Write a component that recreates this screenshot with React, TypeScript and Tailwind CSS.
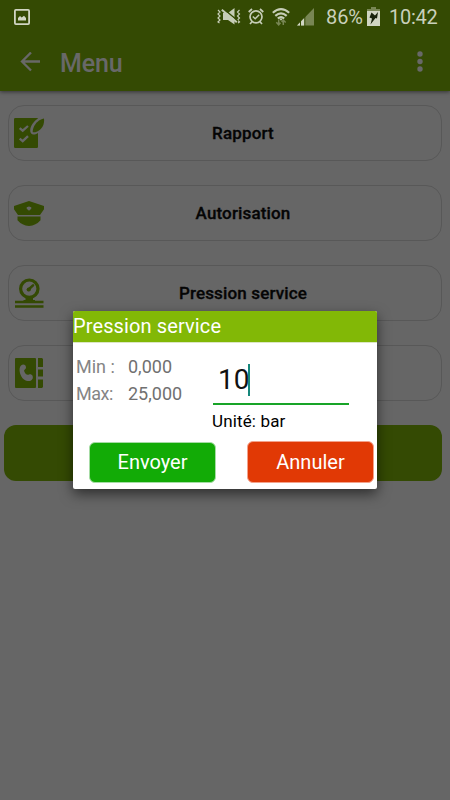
import type { ReactNode } from "react";

function PictureIcon() {
  return (
    <svg className="ml-[14px] h-4 w-4 shrink-0" viewBox="0 0 16 16" fill="none">
      <rect x="0.9" y="0.9" width="14.2" height="14.2" rx="1" stroke="#d0d5c3" strokeWidth="1.8" />
      <path d="M4 11.5V9l2-2 1.7 1.6L10 6.8l2 2.2v2.5z" fill="#d0d5c3" />
    </svg>
  );
}

function MutedIcon() {
  return (
    <svg className="ml-[187px] h-[17px] w-6 shrink-0" viewBox="0 0 24 17" fill="none" stroke="#c6cdb7">
      <path d="M1 2l2 2-2 2 2 2-2 2 2 2-2 2 1.500 1M22.500 2l-2 2 2 2-2 2 2 2-2 2 2 2-1.500 1" strokeWidth="1.200" />
      <path d="M6 5h5l6.500-5v16.500L11 12H6z" fill="#c6cdb7" stroke="none" />
      <path d="M6 0.500l15 12.500" stroke="#344a03" strokeWidth="1.600" />
      <path d="M4.800 1.800l15 12.500" strokeWidth="2" />
    </svg>
  );
}

function AlarmIcon() {
  return (
    <svg className="ml-[7px] h-[17px] w-4 shrink-0" viewBox="0 0 16 17" fill="none" stroke="#c6cdb7" strokeWidth="1.700">
      <circle cx="8" cy="8.800" r="6" />
      <path d="M.7 4L4 1M15.300 4L12 1M4 13.700L2 16M12 13.700l2 2.300" />
      <path d="M4.800 8.500l2.400 2.300 4-4" strokeWidth="1.500" />
    </svg>
  );
}

function WifiIcon() {
  return (
    <svg className="ml-2 h-[18px] w-[18px] shrink-0" viewBox="0 0 18 18" fill="none" stroke="#c6cdb7">
      <path d="M.8 4.800Q9-2.500 17.200 4.800M3.300 7.900Q9 2.800 14.700 7.900M5.800 10.500Q9 7.600 12.200 10.500" strokeWidth="2.100" />
      <path d="M7 10.500h4L9 12.800z" fill="#c6cdb7" stroke="none" />
      <path d="M6.700 11.500v5M4.300 14.300l2.400 2.500 1.800-2M11.300 17v-5M9.600 14l1.700-2 2.400 2.500" stroke="#788654" strokeWidth="1.500" />
    </svg>
  );
}

function SignalIcon() {
  return (
    <svg className="ml-[7px] h-[18px] w-[17px] shrink-0" viewBox="0 0 17 18">
      <path d="M0 17.500L17 0v17.500z" fill="#788654" />
      <path d="M0 17.500L7.500 9.800v7.700z" fill="#d0d5c3" />
      <path d="M3.500 12v6M7.800 7v11" stroke="#344a03" />
    </svg>
  );
}

function BatteryIcon() {
  return (
    <svg className="ml-[5px] h-[19px] w-[13px] shrink-0" viewBox="0 0 13 19">
      <path d="M4 0h5v2h4v3H0V2h4z" fill="#788654" />
      <path d="M0 4h13v15H0z" fill="#d0d5c3" />
      <path d="M4.500 5.500L8 8.500 11 5l-1 6.500L8.500 11l-5 6.500 1.500-6-2.500-1z" fill="#17210a" />
    </svg>
  );
}

function ReportIcon() {
  return (
    <svg viewBox="0 0 31 31" className="h-[31px] w-[31px] shrink-0" fill="none">
      <rect x="0" y="0" width="24" height="30" rx="1.300" fill="#344a03" />
      <path d="M5.700 10.200l3 2.500 5.300-4.700M5.700 20.700l3 2.500 5.300-5" stroke="#666" strokeWidth="2.300" />
      <path d="M24.500 0C20 3 16.500 7.500 16.200 12c-.2 4.500 3 6 7.800 3V0z" fill="#666" />
      <path d="M30 .5c-5 1-8.500 4.500-10.200 8.500-.8 2-1.300 4.300-1 5.200 3.800.8 7.700-2.200 9.700-5.400C30 6 30.300 3 30 .5z" fill="#344a03" />
    </svg>
  );
}

function CapIcon() {
  return (
    <svg viewBox="0 0 31 31" className="h-[31px] w-[31px] shrink-0" fill="#344a03">
      <path fillRule="evenodd" d="M0 8L15 3l15 5v3.200L26 17H4L0 11.200zM12.700 9.200v1.500L15 12.800l2.300-2.100V9.200L15 8.500z" />
      <path d="M3.500 18.500h23v3.800Q22 27.500 15 28 8 27.500 3.500 22.300z" />
    </svg>
  );
}

function GaugeIcon() {
  return (
    <svg viewBox="0 0 31 31" className="h-[31px] w-[31px] shrink-0" fill="none" stroke="#344a03">
      <circle cx="15.300" cy="10.700" r="8.700" strokeWidth="3.200" />
      <path d="M14 12l5-4.700" strokeWidth="2.500" strokeLinecap="round" />
      <circle cx="14.800" cy="11.500" r="2.100" fill="#344a03" stroke="none" />
      <path d="M11.500 19h7.500v3h2v2H9.500v-2h2z" fill="#344a03" stroke="none" />
      <path d="M1 24h28.500M1 28.500h28.500" strokeWidth="2.300" />
    </svg>
  );
}

function ContactsIcon() {
  return (
    <svg viewBox="0 0 31 31" className="h-[31px] w-[31px] shrink-0" fill="#344a03">
      <rect x="1" y="0" width="21" height="30" rx="1" />
      <path d="M24 0h4l1 1v8h-5zM24 11.500h5v7h-5zM24 21.500h5v7.500l-1 1h-4z" />
      <path d="M7 7.500c2.500-2 5-.5 5 2 0 2-2.500 2-1.700 4 1 2.500 2.700 4 4.700 3 2.500-1.200 4.500 1.500 3.700 4-1.200 3-5.200 3.500-8.700 1C6 18.500 4 10.500 7 7.500z" fill="#666" />
    </svg>
  );
}

function MenuRow({ icon, label }: { icon: ReactNode; label: string }) {
  return (
    <div className="flex h-14 items-center rounded-2xl border border-[#585858] pl-[5px]">
      {icon}
      <span className="flex-1 pt-px text-center text-[17px] font-medium tracking-[0.150px] text-[#050505] [-webkit-text-stroke:0.300px_#050505]">{label}</span>
    </div>
  );
}

function PressureDialog() {
  return (
    <div className="absolute top-[311px] left-[73px] flex h-[178px] w-[304px] flex-col overflow-hidden rounded-[2px] bg-white shadow-[0_5px_13px_rgba(0,0,0,0.55)]">
      <div className="flex h-[31px] shrink-0 items-center bg-[#82b806] text-[20px] tracking-[0.120px] text-white">
        <span className="-mt-0.5">Pression service</span>
      </div>
      <div className="flex h-[99px] shrink-0 border-t border-[#dce6c5]">
        <div className="grid h-[65px] w-[140px] grid-cols-[52px_1fr] content-start pt-[10px] pl-[3px] text-[18px] leading-[27px] text-[#858585]">
          <span>Min :</span>
          <span className="text-[#707070]">0,000</span>
          <span className="tracking-[-0.500px]">Max:</span>
          <span className="text-[#707070]">25,000</span>
        </div>
        <div className="w-[136px]">
          <div className="flex h-[62px] items-center border-b-2 border-[#18a428] pt-[13px] pl-[5px] text-[28px] text-[#111]">
            <span>10</span>
            <span className="-ml-px h-8 w-[1.500px] bg-[#16877b]" />
          </div>
          <div className="mt-[5px] -ml-px text-[17px] leading-[22px] tracking-[0.150px] text-black">Unité: bar</div>
        </div>
      </div>
      <div className="flex gap-[31px] pl-4 text-[20px] text-white">
        <button className="mt-px h-[41px] w-[127px] rounded-[6px] border border-[#a6dca5] bg-[#12ab06] pb-px">Envoyer</button>
        <button className="h-[42px] w-[127px] rounded-[6px] border border-[#f3a28b] bg-[#e13905] pb-px">Annuler</button>
      </div>
    </div>
  );
}

export default function App() {
  return (
    <div className="relative h-[800px] w-[450px] overflow-hidden bg-[#666] font-['Roboto','Liberation_Sans',sans-serif]">
      <header className="h-[91px] bg-[#344a03] shadow-[0_1px_4px_rgba(0,0,0,0.5)]">
        <div className="flex h-[33px] items-center text-[#c9d0bb]">
          <PictureIcon />
          <MutedIcon />
          <AlarmIcon />
          <WifiIcon />
          <SignalIcon />
          <span className="ml-3 w-9 whitespace-nowrap text-[20px] tracking-[-0.100px]">86%</span>
          <BatteryIcon />
          <span className="ml-[9px] text-[20px] tracking-[-0.250px]">10:42</span>
        </div>
        <div className="flex h-[58px] items-center text-[#686868]">
          <svg className="ml-5 h-5 w-5" viewBox="0 0 20 20" fill="none" stroke="currentColor" strokeWidth="2.300">
            <path d="M20 9.500H2M11 .5l-9 9 9 9" />
          </svg>
          <span className="ml-5 pt-[3px] text-[25px] font-medium tracking-[-0.150px]">Menu</span>
          <svg className="mr-[27px] ml-auto h-5 w-[6px] overflow-visible" viewBox="0 0 6 20" fill="currentColor">
            <circle cx="3" cy="2" r="2.700" />
            <circle cx="3" cy="9.500" r="2.700" />
            <circle cx="3" cy="17" r="2.700" />
          </svg>
        </div>
      </header>
      <main>
        <div className="flex flex-col gap-6 px-2 pt-[14px]">
          <MenuRow icon={<ReportIcon />} label="Rapport" />
          <MenuRow icon={<CapIcon />} label="Autorisation" />
          <MenuRow icon={<GaugeIcon />} label="Pression service" />
          <MenuRow icon={<ContactsIcon />} label="" />
        </div>
        <div className="mt-6 mr-2 ml-1 h-14 rounded-[12px] bg-[#344a03]" />
      </main>
      <PressureDialog />
    </div>
  );
}
